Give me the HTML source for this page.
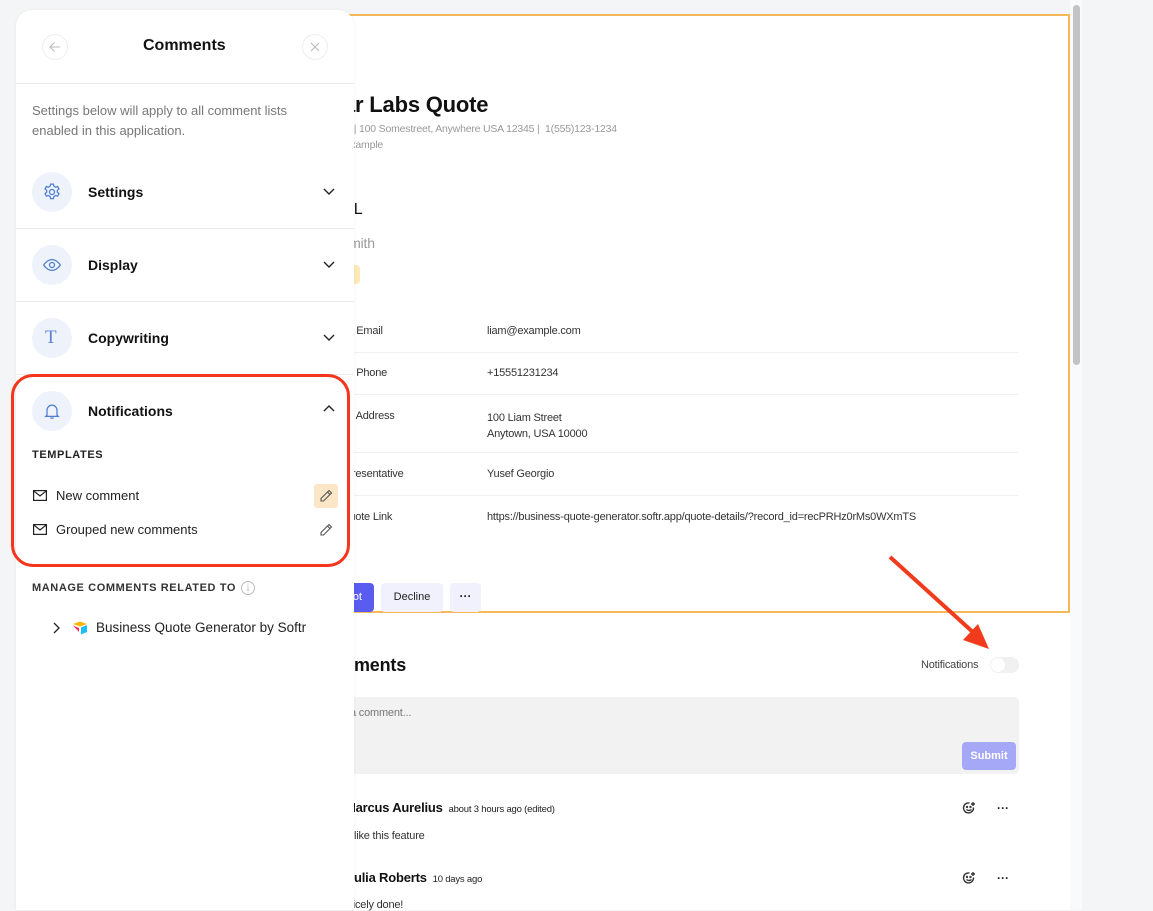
<!DOCTYPE html>
<html><head><meta charset="utf-8"><style>
*{box-sizing:border-box;margin:0;padding:0}
body{width:1153px;height:910px;overflow:hidden;background:#f4f5f7;font-family:"Liberation Sans",sans-serif;position:relative;color:#111}
.a{position:absolute;white-space:nowrap}
.main{position:absolute;left:330px;top:14px;width:740px;height:896px;background:#fff}
.lato{font-family:"Liberation Sans",sans-serif;letter-spacing:-0.2px}
.row{position:absolute;left:354px;width:664px;height:1px;background:#f0f0f0}
.lab{font-size:11px;color:#333}
.panel{position:absolute;left:16px;top:10px;width:338px;height:900px;background:#fff;border-radius:16px 16px 0 0;box-shadow:0 0 3px rgba(0,0,0,.06)}
.hd{position:absolute;left:0;width:338px;height:1px;background:#ebebeb}
.ic{position:absolute;left:16px;width:40px;height:40px;border-radius:50%;background:#edf2fb}
.ic svg{position:absolute;left:10px;top:10px}
.st{position:absolute;left:72px;font-size:14px;font-weight:bold;color:#111}
.ch{position:absolute;left:306px}
</style></head><body>
<div class="main"></div>
<div class="a" style="left:1070px;top:0;width:12px;height:910px;background:#fafafa"></div>
<div class="a" style="left:1073px;top:5px;width:7px;height:360px;background:#c3c3c3;border-radius:4px"></div>
<div class="a" style="left:330px;top:14px;width:740px;height:599px;border:2px solid #f5b95a;border-left:none"></div>

<div class="a lato" style="left:343px;top:92px;font-size:22px;font-weight:bold;color:#111">ar Labs Quote</div>
<div class="a lato" style="left:346px;top:123px;font-size:10.5px;color:#999">s | 100 Somestreet, Anywhere USA 12345 |&nbsp; 1(555)123-1234</div>
<div class="a lato" style="left:342px;top:139px;font-size:10.5px;color:#999">.example</div>
<div class="a lato" style="left:345px;top:201px;font-size:16px;color:#111">LL</div>
<div class="a lato" style="left:340px;top:235px;font-size:14px;color:#999">Smith</div>
<div class="a" style="left:330px;top:265px;width:30px;height:19px;background:#fde9b5;border-radius:4px"></div>

<div class="a lato lab" style="left:344px;top:325px">er Email</div><div class="a lato lab" style="left:487px;top:325px">liam@example.com</div>
<div class="row" style="top:352px"></div>
<div class="a lato lab" style="left:344px;top:367px">er Phone</div><div class="a lato lab" style="left:487px;top:367px">+15551231234</div>
<div class="row" style="top:394px"></div>
<div class="a lato lab" style="left:344px;top:410px">er Address</div><div class="a lato lab" style="left:487px;top:410px;line-height:16px">100 Liam Street<br>Anytown, USA 10000</div>
<div class="row" style="top:452px"></div>
<div class="a lato lab" style="left:346px;top:468px">presentative</div><div class="a lato lab" style="left:487px;top:468px">Yusef Georgio</div>
<div class="row" style="top:495px"></div>
<div class="a lato lab" style="left:341px;top:511px">Quote Link</div><div class="a lato lab" style="left:487px;top:511px">https://business-quote-generator.softr.app/quote-details/?record_id=recPRHz0rMs0WXmTS</div>

<div class="a" style="left:330px;top:583px;width:44px;height:29px;background:#5a5cf0;border-radius:4px;color:#fff;font-size:11px;line-height:29px;text-align:right;padding-right:12px">ot</div>
<div class="a" style="left:381px;top:583px;width:62px;height:29px;background:#f0f1fd;border-radius:4px;font-size:11px;line-height:29px;text-align:center;color:#222">Decline</div>
<div class="a" style="left:450px;top:583px;width:31px;height:29px;background:#f0f1fd;border-radius:4px;font-size:12px;line-height:26px;text-align:center;color:#222;font-weight:bold">···</div>

<div class="a lato" style="left:354px;top:655px;font-size:18px;font-weight:bold;color:#111">ments</div>
<div class="a lato" style="left:921px;top:659px;font-size:11px;color:#444">Notifications</div>
<div class="a" style="left:990px;top:657px;width:29px;height:16px;border-radius:8px;background:#f0f0f0"><div style="position:absolute;left:1px;top:1px;width:14px;height:14px;border-radius:50%;background:#fff"></div></div>
<div class="a" style="left:330px;top:697px;width:689px;height:77px;background:#f2f2f2;border-radius:5px"></div>
<div class="a lato" style="left:350px;top:707px;font-size:11px;color:#777">a comment...</div>
<div class="a" style="left:962px;top:742px;width:54px;height:28px;background:#a5a7f7;border-radius:4px;color:#fff;font-size:11px;line-height:28px;text-align:center;font-weight:bold">Submit</div>

<div class="a lato" style="left:345px;top:800px;font-size:13px;font-weight:bold;color:#111">Marcus Aurelius <span style="font-size:9.5px;font-weight:normal;color:#222">&nbsp;about 3 hours ago (edited)</span></div>
<div class="a lato" style="left:354px;top:830px;font-size:11px;color:#333">like this feature</div>
<div class="a lato" style="left:347px;top:870px;font-size:13px;font-weight:bold;color:#111">Julia Roberts <span style="font-size:9.5px;font-weight:normal;color:#222">&nbsp;10 days ago</span></div>
<div class="a lato" style="left:345px;top:899px;font-size:11px;color:#333">Nicely done!</div>
<svg class="a" style="left:962px;top:801px" width="14" height="14" viewBox="0 0 14 14" fill="none" stroke="#333" stroke-width="1.4"><path d="M11.5 6.5A5 5 0 1 1 7.5 2"/><path d="M4.5 8.5q2.5 2 5 0"/><circle cx="5" cy="6" r=".5"/><circle cx="8.5" cy="6" r=".5"/><path d="M11 1v4M9 3h4"/></svg>
<svg class="a" style="left:962px;top:871px" width="14" height="14" viewBox="0 0 14 14" fill="none" stroke="#333" stroke-width="1.4"><path d="M11.5 6.5A5 5 0 1 1 7.5 2"/><path d="M4.5 8.5q2.5 2 5 0"/><circle cx="5" cy="6" r=".5"/><circle cx="8.5" cy="6" r=".5"/><path d="M11 1v4M9 3h4"/></svg>
<div class="a" style="left:997px;top:801px;font-size:12px;font-weight:bold;color:#222">···</div>
<div class="a" style="left:997px;top:871px;font-size:12px;font-weight:bold;color:#222">···</div>

<svg class="a" style="left:0;top:0" width="1153" height="910"><line x1="890" y1="557" x2="975" y2="634" stroke="#f23a1c" stroke-width="4"/><polygon points="989,649 963,640 978,624" fill="#f23a1c"/></svg>

<div class="panel">
  <div class="a" style="left:26px;top:24px;width:26px;height:26px;border:1px solid #eee;border-radius:50%"><svg style="position:absolute;left:6px;top:6px" width="12" height="12" viewBox="0 0 12 12" fill="none" stroke="#bbb" stroke-width="1.1"><path d="M11 6H1M5.5 1.5 1 6l4.5 4.5"/></svg></div>
  <div class="a" style="left:127px;top:27px;font-size:16px;font-weight:bold">Comments</div>
  <div class="a" style="left:286px;top:24px;width:26px;height:26px;border:1px solid #eee;border-radius:50%"><svg style="position:absolute;left:7px;top:7px" width="10" height="10" viewBox="0 0 10 10" stroke="#bbb" stroke-width="1.1"><path d="M1 1l8 8M9 1 1 9"/></svg></div>
  <div class="hd" style="top:73px"></div>
  <div class="a" style="left:16px;top:91px;font-size:13px;color:#777;line-height:20px">Settings below will apply to all comment lists<br>enabled in this application.</div>

  <div class="ic" style="top:162px"><svg width="20" height="20" viewBox="0 0 24 24" fill="none" stroke="#4f7dd1" stroke-width="1.5"><path d="M10.3 2.5h3.4l.6 2.6 1.9 1.1 2.5-.8 1.7 2.9-2 1.8v2.2l2 1.8-1.7 2.9-2.5-.8-1.900 1.1-.6 2.6h-3.4l-.6-2.6-1.9-1.1-2.5.8-1.7-2.9 2-1.8v-2.2l-2-1.8 1.7-2.9 2.5.8 1.9-1.1z"/><circle cx="12" cy="12" r="3"/></svg></div>
  <div class="st" style="top:174px">Settings</div>
  <svg class="ch" style="top:176px" width="14" height="10" viewBox="0 0 14 10" fill="none" stroke="#222" stroke-width="1.4"><path d="M2 3l5 5 5-5"/></svg>
  <div class="hd" style="top:218px"></div>

  <div class="ic" style="top:235px"><svg width="20" height="20" viewBox="0 0 24 24" fill="none" stroke="#4f7dd1" stroke-width="1.5"><path d="M2 12s4-6.5 10-6.5S22 12 22 12s-4 6.5-10 6.5S2 12 2 12z"/><circle cx="12" cy="12" r="3"/></svg></div>
  <div class="st" style="top:247px">Display</div>
  <svg class="ch" style="top:249px" width="14" height="10" viewBox="0 0 14 10" fill="none" stroke="#222" stroke-width="1.4"><path d="M2 3l5 5 5-5"/></svg>
  <div class="hd" style="top:291px"></div>

  <div class="ic" style="top:308px"><span style="position:absolute;left:13px;top:9px;font-family:'Liberation Serif',serif;font-size:19px;color:#5b86d3">T</span></div>
  <div class="st" style="top:320px">Copywriting</div>
  <svg class="ch" style="top:322px" width="14" height="10" viewBox="0 0 14 10" fill="none" stroke="#222" stroke-width="1.4"><path d="M2 3l5 5 5-5"/></svg>
  <div class="hd" style="top:364px"></div>

  <div class="ic" style="top:381px"><svg width="20" height="20" viewBox="0 0 24 24" fill="none" stroke="#4f7dd1" stroke-width="1.5"><path d="M6 17V11a6 6 0 0 1 12 0v6l1.5 1.5h-15z"/><path d="M10 20.5h4"/></svg></div>
  <div class="st" style="top:393px">Notifications</div>
  <svg class="ch" style="top:393px" width="14" height="10" viewBox="0 0 14 10" fill="none" stroke="#222" stroke-width="1.4"><path d="M2 8l5-5 5 5"/></svg>
  <div class="a" style="left:16px;top:439px;font-size:11px;font-weight:bold;letter-spacing:.6px;color:#222">TEMPLATES</div>
  <svg class="a" style="left:17px;top:480px" width="14" height="11" viewBox="0 0 14 11" fill="none" stroke="#222" stroke-width="1.2"><rect x=".6" y=".6" width="12.8" height="9.8"/><path d="M.6 .8 7 6l6.4-5.2"/></svg>
  <div class="a" style="left:40px;top:478px;font-size:13px;color:#222">New comment</div>
  <div class="a" style="left:298px;top:474px;width:24px;height:24px;background:#fbe6c8;border-radius:3px"><svg style="position:absolute;left:5px;top:5px" width="14" height="14" viewBox="0 0 14 14" fill="none" stroke="#555" stroke-width="1.1"><path d="M10 1.5l2.5 2.5-8 8H2v-2.5zM8.5 3l2.5 2.5"/></svg></div>
  <svg class="a" style="left:17px;top:514px" width="14" height="11" viewBox="0 0 14 11" fill="none" stroke="#222" stroke-width="1.2"><rect x=".6" y=".6" width="12.8" height="9.8"/><path d="M.6 .8 7 6l6.4-5.2"/></svg>
  <div class="a" style="left:40px;top:512px;font-size:13px;color:#222">Grouped new comments</div>
  <svg class="a" style="left:303px;top:513px" width="14" height="14" viewBox="0 0 14 14" fill="none" stroke="#555" stroke-width="1.1"><path d="M10 1.5l2.5 2.5-8 8H2v-2.5zM8.5 3l2.5 2.5"/></svg>

  <div class="a" style="left:16px;top:572px;font-size:11px;font-weight:bold;letter-spacing:.6px;color:#333">MANAGE COMMENTS RELATED TO</div>
  <div class="a" style="left:225px;top:571px;width:14px;height:14px;border:1px solid #bbb;border-radius:50%;font-size:9px;color:#aaa;text-align:center;line-height:12px;font-family:'Liberation Serif',serif">i</div>
  <svg class="a" style="left:36px;top:612px" width="8" height="12" viewBox="0 0 8 12" fill="none" stroke="#222" stroke-width="1.3"><path d="M2 1l5 5-5 5"/></svg>
  <svg class="a" style="left:56px;top:611px" width="16" height="14" viewBox="0 0 16 14"><path d="M1 3l7-2.5 7 2.5-7 2.5z" fill="#fcb400"/><path d="M9 6.5l6-2.5v7l-6 2.5z" fill="#18bfff"/><path d="M1 4.5l6 2.5v4z" fill="#f82b60"/></svg>
  <div class="a" style="left:80px;top:610px;font-size:13.5px;color:#222">Business Quote Generator by Softr</div>
</div>
<div class="a" style="left:11px;top:374px;width:339px;height:193px;border:3.5px solid #f5351c;border-radius:22px"></div>
</body></html>
